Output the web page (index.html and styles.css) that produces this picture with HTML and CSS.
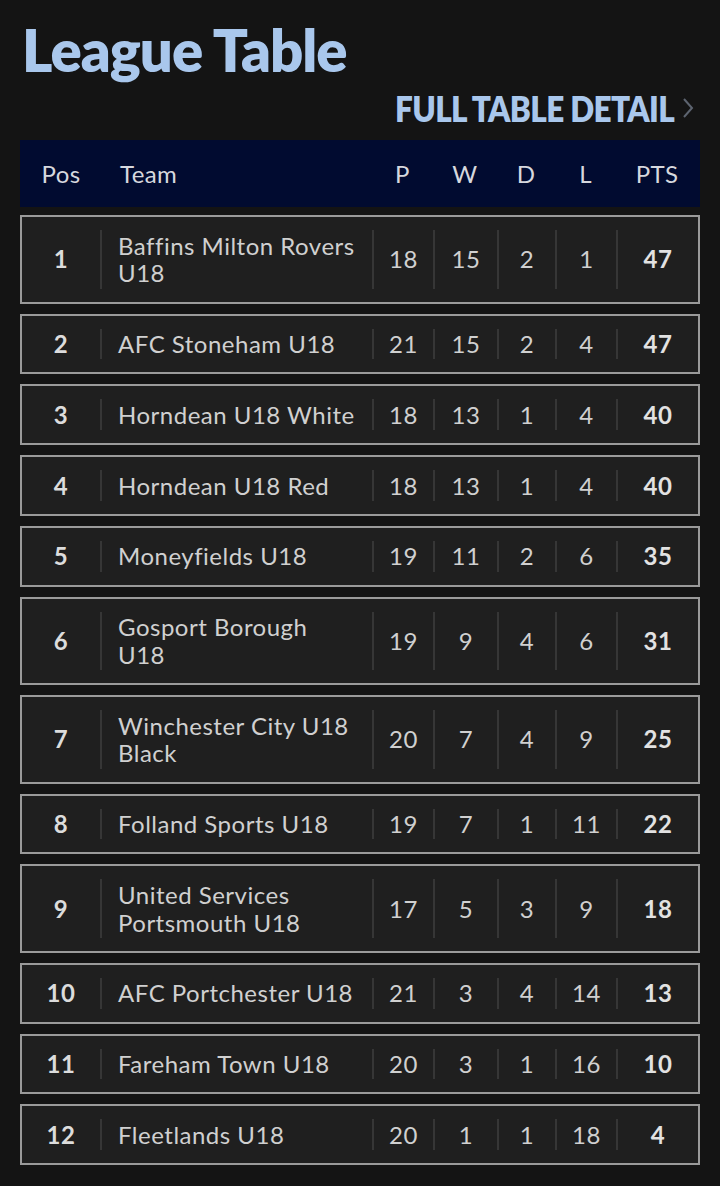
FILE: index.html
```html
<!DOCTYPE html>
<html lang="en">
<head>
<meta charset="utf-8">
<title>League Table</title>
<link rel="stylesheet" href="styles.css">
</head>
<body>
<main class="page">
  <h1 class="title">League Table</h1>
  <div class="detail-row">
    <a class="detail-link" href="#">FULL TABLE DETAIL</a>
    <svg class="chev" width="12" height="24" viewBox="0 0 12 24"><polyline points="2,3 10,12 2,21" fill="none" stroke="#5d6470" stroke-width="2"/></svg>
  </div>
  <div class="thead">
    <div class="h pos">Pos</div>
    <div class="h team">Team</div>
    <div class="h">P</div>
    <div class="h">W</div>
    <div class="h">D</div>
    <div class="h">L</div>
    <div class="h">PTS</div>
  </div>
  <div class="rows">
    <div class="row"><div class="c pos">1</div><div class="c team">Baffins Milton Rovers U18</div><div class="c">18</div><div class="c">15</div><div class="c">2</div><div class="c">1</div><div class="c pts">47</div></div>
    <div class="row"><div class="c pos">2</div><div class="c team">AFC Stoneham U18</div><div class="c">21</div><div class="c">15</div><div class="c">2</div><div class="c">4</div><div class="c pts">47</div></div>
    <div class="row"><div class="c pos">3</div><div class="c team">Horndean U18 White</div><div class="c">18</div><div class="c">13</div><div class="c">1</div><div class="c">4</div><div class="c pts">40</div></div>
    <div class="row"><div class="c pos">4</div><div class="c team">Horndean U18 Red</div><div class="c">18</div><div class="c">13</div><div class="c">1</div><div class="c">4</div><div class="c pts">40</div></div>
    <div class="row"><div class="c pos">5</div><div class="c team">Moneyfields U18</div><div class="c">19</div><div class="c">11</div><div class="c">2</div><div class="c">6</div><div class="c pts">35</div></div>
    <div class="row"><div class="c pos">6</div><div class="c team">Gosport Borough U18</div><div class="c">19</div><div class="c">9</div><div class="c">4</div><div class="c">6</div><div class="c pts">31</div></div>
    <div class="row"><div class="c pos">7</div><div class="c team">Winchester City U18 Black</div><div class="c">20</div><div class="c">7</div><div class="c">4</div><div class="c">9</div><div class="c pts">25</div></div>
    <div class="row"><div class="c pos">8</div><div class="c team">Folland Sports U18</div><div class="c">19</div><div class="c">7</div><div class="c">1</div><div class="c">11</div><div class="c pts">22</div></div>
    <div class="row"><div class="c pos">9</div><div class="c team">United Services Portsmouth U18</div><div class="c">17</div><div class="c">5</div><div class="c">3</div><div class="c">9</div><div class="c pts">18</div></div>
    <div class="row"><div class="c pos">10</div><div class="c team">AFC Portchester U18</div><div class="c">21</div><div class="c">3</div><div class="c">4</div><div class="c">14</div><div class="c pts">13</div></div>
    <div class="row"><div class="c pos">11</div><div class="c team">Fareham Town U18</div><div class="c">20</div><div class="c">3</div><div class="c">1</div><div class="c">16</div><div class="c pts">10</div></div>
    <div class="row"><div class="c pos">12</div><div class="c team">Fleetlands U18</div><div class="c">20</div><div class="c">1</div><div class="c">1</div><div class="c">18</div><div class="c pts">4</div></div>
  </div>
</main>
</body>
</html>
```

FILE: styles.css
```css
html, body {
  margin: 0;
  padding: 0;
  background: #141414;
}
body {
  font-family: Lato, "Open Sans", sans-serif;
  color: #d0d0d0;
}
.page {
  padding: 16px 20px 0 20px;
}
.title {
  margin: 0;
  padding-left: 2px;
  font-size: 58px;
  line-height: 68px;
  font-weight: 800;
  color: #a9c7ec;
  letter-spacing: -1px;
}
.detail-row {
  display: flex;
  justify-content: flex-end;
  align-items: center;
  gap: 8px;
  height: 44px;
  margin-top: 2px;
  padding-right: 6px;
}
.detail-link {
  display: block;
  font-size: 35px;
  font-weight: 800;
  color: #a9c7ec;
  text-decoration: none;
  letter-spacing: -0.7px;
  transform: scaleX(0.9);
  transform-origin: right center;
}
.chev { display: block; }
.thead {
  margin-top: 10px;
  height: 67px;
  background: #010b30;
  display: grid;
  grid-template-columns: 78px 272px 61px 64px 58px 61px 82px;
  padding: 0 2px;
  align-items: center;
  font-size: 24px;
  letter-spacing: 0.4px;
  color: #d6d8de;
}
.h { text-align: center; }
.h.team { text-align: left; padding-left: 20px; }
.rows {
  display: flex;
  flex-direction: column;
  gap: 10px;
  margin-top: 8px;
}
.row {
  display: grid;
  grid-template-columns: 78px 272px 61px 64px 58px 61px 82px;
  border: 2px solid #9a9a9a;
  background: #1f1f1f;
  font-size: 24px;
  line-height: 27.75px;
  letter-spacing: 0.5px;
}
.c {
  display: flex;
  align-items: center;
  justify-content: center;
  margin: 13px 0;
  border-left: 2px solid #363636;
}
.c.pos {
  border-left: none;
  font-weight: 700;
  color: #dcdcdc;
}
.c.team {
  justify-content: flex-start;
  padding: 1.5px 16px 1.5px 16px;
}
.c.pts {
  font-weight: 700;
  color: #e2e2e2;
}
```
